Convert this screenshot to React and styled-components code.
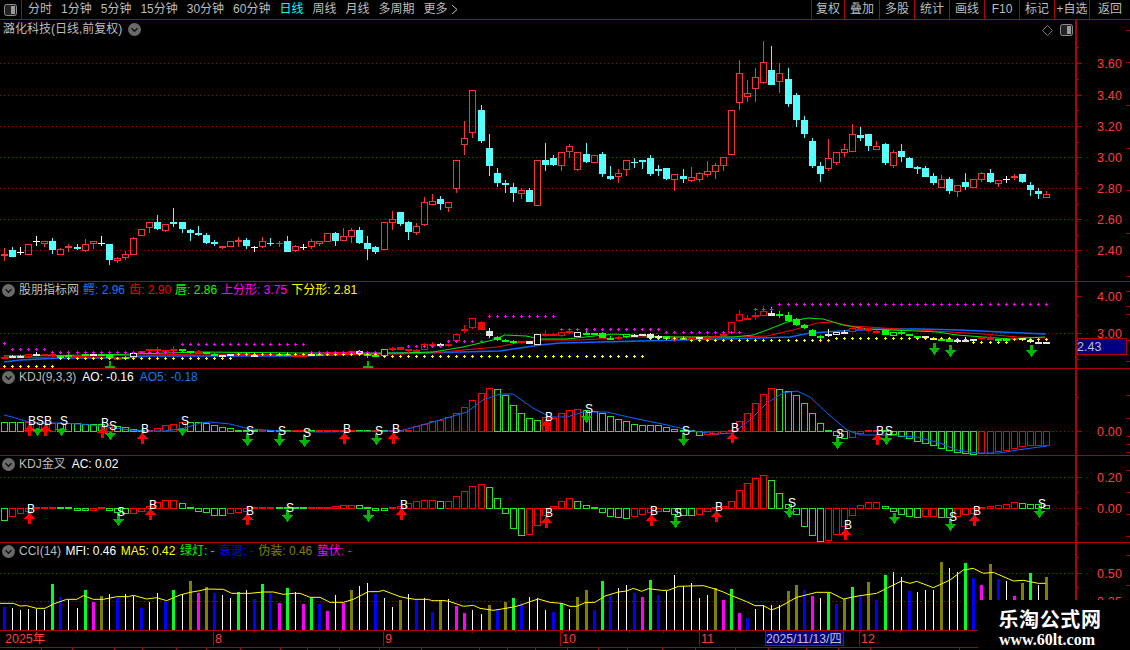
import React from "react";
import styled, { createGlobalStyle } from "styled-components";

const RED_LINE = "#b00000";
const GRID = "#960000";
const TEXT = "#bdbdbd";
const FONT = `"Liberation Sans", "Noto Sans CJK SC", sans-serif`;

const Global = createGlobalStyle`
  html, body { margin: 0; padding: 0; background: #000; }
  body { font-family: ${FONT}; }
`;

const Screen = styled.div`
  position: relative;
  width: 1130px;
  height: 650px;
  overflow: hidden;
  background: #000;
  display: flex;
  flex-direction: column;
  font-size: 12px;
  color: ${TEXT};
`;

const Toolbar = styled.div`
  display: flex;
  align-items: stretch;
  height: 20px;
  flex: 0 0 20px;
  box-sizing: border-box;
  border-bottom: 1px solid ${RED_LINE};
`;
const ToggleCell = styled.div`
  width: 22px;
  display: flex;
  align-items: center;
  justify-content: center;
  box-sizing: border-box;
  border-right: 1px solid ${RED_LINE};
`;
const Nav = styled.nav`
  display: flex;
  align-items: center;
  gap: 9px;
  padding-left: 6px;
`;
const NavItem = styled.span`
  color: ${(p) => (p.$active ? "#00ffff" : TEXT)};
  line-height: 19px;
  white-space: nowrap;
`;
const NavMore = styled.span`
  display: flex;
  margin-left: -6px;
`;
const ToolGroup = styled.div`
  margin-left: auto;
  display: flex;
`;
const ToolButton = styled.div`
  width: ${(p) => p.$w || 35}px;
  box-sizing: border-box;
  border-left: 1px solid ${RED_LINE};
  text-align: center;
  line-height: 19px;
  white-space: nowrap;
  color: ${TEXT};
`;

const Pane = styled.section`
  position: relative;
  display: flex;
  height: ${(p) => p.$h}px;
  flex: 0 0 ${(p) => p.$h}px;
  box-sizing: border-box;
  border-bottom: 1px solid ${RED_LINE};
`;
const PaneHeader = styled.header`
  position: absolute;
  left: ${(p) => p.$left ?? 2}px;
  top: ${(p) => p.$top ?? 0}px;
  display: flex;
  align-items: center;
  gap: ${(p) => p.$gap ?? 6}px;
  height: 16px;
  white-space: nowrap;
`;
const TitleGroup = styled.div`
  display: flex;
  align-items: center;
  gap: 4px;
`;
const Readout = styled.span`
  color: ${(p) => p.$c || TEXT};
  line-height: 16px;
`;
const CornerTools = styled.div`
  position: absolute;
  right: 57px;
  top: 4px;
  display: flex;
  align-items: center;
  gap: 7px;
`;
const ChartSvg = styled.svg`
  display: block;
  flex: 0 0 1075px;
  width: 1075px;
  height: 100%;
  shape-rendering: crispEdges;
`;
const AxisSvg = styled.svg`
  display: block;
  flex: 1 1 auto;
  height: 100%;
  box-sizing: border-box;
  border-left: 2px solid ${RED_LINE};
  shape-rendering: crispEdges;
`;
const AxisLabel = styled.text`
  font-family: ${FONT};
  font-size: 12.5px;
  fill: #ff3c3c;
  letter-spacing: 0.2px;
`;
const PriceTag = styled.text`
  font-family: ${FONT};
  font-size: 12.5px;
  fill: #c0c0c0;
`;
const SignalMark = styled.text`
  font-family: ${FONT};
  font-size: 12px;
  fill: #fff;
  text-anchor: middle;
`;

const TimeAxis = styled.div`
  flex: 0 0 17px;
  height: 17px;
  box-sizing: border-box;
  border-bottom: 1px solid ${RED_LINE};
`;
const TimeSvg = styled.svg`
  display: block;
  width: 1130px;
  height: 16px;
  shape-rendering: crispEdges;
`;
const TimeText = styled.text`
  font-family: ${FONT};
  font-size: 12.5px;
  fill: #ff3c3c;
`;
const CursorText = styled.text`
  font-family: ${FONT};
  font-size: 12.2px;
  fill: #c0c0c0;
`;
const BottomBar = styled.div`
  display: flex;
  flex: 1 1 auto;
`;
const BottomTab = styled.div`
  flex: 0 0 ${(p) => p.$w}px;
  box-sizing: border-box;
  border-right: 1px solid ${RED_LINE};
`;

const Watermark = styled.div`
  position: absolute;
  right: 0;
  bottom: 0;
  width: 152px;
  height: 50px;
  background: #000;
  display: flex;
  flex-direction: column;
  align-items: center;
  padding-right: 8px;
  box-sizing: border-box;
`;
const WatermarkTitle = styled.div`
  color: #fff;
  font-family: "Noto Sans CJK SC", sans-serif;
  font-weight: 700;
  font-size: 20px;
  line-height: 24px;
  margin-top: 7px;
  letter-spacing: 0.6px;
`;
const WatermarkUrl = styled.div`
  color: #fff;
  font-family: "Liberation Serif", serif;
  font-weight: 700;
  font-size: 16px;
  line-height: 16px;
  margin-top: 1px;
  margin-right: 6px;
`;

/* ---------- data ---------- */
const X = (i) => Math.floor(4.3 + 8.08 * i);
const CY = "#55ffff";
const CR = "#ff3232";

// wick top, body top, body bottom, wick bottom, kind — in crop units (y = 40 + v / 3)
const CANDLES = [
  [625,642,648,662,"R"],[622,630,650,650,"c"],[622,636,639,645,"w"],[613,613,644,644,"r"],[589,603,605,617,"w"],
  [604,604,611,620,"r"],[595,603,630,641,"c"],[625,628,644,644,"r"],[613,618,623,635,"R"],[613,621,626,630,"c"],
  [598,613,632,635,"r"],[603,604,613,628,"r"],[589,610,612,618,"w"],[612,612,660,674,"c"],[651,655,663,668,"r"],
  [632,643,653,660,"r"],[592,595,644,645,"r"],[568,568,587,587,"r"],[546,547,563,578,"r"],[526,546,568,570,"c"],
  [553,553,572,575,"r"],[504,546,552,561,"c"],[546,546,567,579,"c"],[568,570,579,603,"c"],[558,579,585,587,"c"],
  [579,585,609,611,"c"],[601,607,611,618,"c"],[617,618,624,627,"R"],[604,604,620,620,"r"],[592,600,606,621,"R"],
  [595,600,618,627,"c"],[617,620,622,636,"w"],[591,604,620,625,"r"],[595,609,612,618,"c"],[604,608,613,620,"R"],
  [589,603,636,636,"c"],[616,619,632,636,"r"],[613,621,623,630,"w"],[598,604,620,627,"r"],[604,604,611,618,"r"],
  [580,580,605,606,"r"],[576,579,603,617,"c"],[565,589,602,603,"r"],[565,571,590,609,"r"],[561,570,609,612,"c"],
  [589,609,627,660,"c"],[618,621,636,642,"c"],[547,547,629,629,"r"],[514,538,548,570,"r"],[516,516,552,558,"c"],
  [543,546,575,600,"c"],[550,559,578,585,"r"],[472,487,554,558,"r"],[462,484,494,495,"r"],[468,477,492,510,"c"],
  [487,487,503,516,"r"],[361,361,446,458,"r"],[243,295,314,345,"r"],[151,151,278,294,"r"],[195,210,303,309,"c"],
  [282,324,378,408,"c"],[384,399,429,441,"c"],[420,428,434,459,"c"],[430,441,459,486,"c"],[445,451,461,477,"r"],
  [445,450,486,486,"c"],[361,361,497,497,"r"],[309,360,375,393,"c"],[346,354,375,378,"c"],
  [335,335,378,393,"r"],[312,319,335,353,"r"],[337,337,389,393,"r"],[309,342,365,368,"c"],[346,346,368,368,"r"],
  [336,343,402,410,"c"],[378,408,417,420,"c"],[388,400,411,429,"r"],[361,361,389,408,"r"],[354,365,369,384,"c"],
  [360,361,366,387,"c"],[346,354,402,408,"c"],[375,387,393,408,"c"],[384,384,417,420,"c"],[403,403,419,453,"r"],
  [387,408,417,429,"c"],[381,412,422,425,"r"],[396,400,419,426,"r"],[363,394,404,411,"r"],[369,376,395,417,"r"],
  [351,351,377,393,"r"],[211,211,344,344,"r"],[60,100,188,210,"r"],[120,160,170,186,"r"],[84,112,146,186,"r"],
  [3,67,128,132,"r"],[18,90,135,135,"c"],[69,100,125,159,"r"],[84,117,192,201,"c"],[160,165,240,261,"c"],
  [228,240,282,294,"c"],[294,303,378,384,"c"],[366,378,402,426,"c"],[297,355,386,393,"r"],[337,337,368,375,"r"],
  [312,328,339,351,"r"],[252,283,335,336,"r"],[261,285,294,303,"c"],[282,282,318,333,"c"],[304,319,329,330,"r"],
  [310,312,369,375,"c"],[331,337,378,384,"r"],[312,333,351,366,"c"],[351,354,384,384,"c"],[378,382,386,402,"c"],
  [378,384,411,411,"c"],[399,408,429,435,"c"],[405,418,444,444,"r"],[411,417,453,462,"c"],[436,436,455,471,"r"],
  [399,426,441,450,"c"],[418,418,444,444,"r"],[396,400,419,426,"r"],[387,399,426,429,"c"],[421,421,431,441,"r"],
  [408,417,420,429,"w"],[402,408,413,420,"R"],[402,402,426,429,"c"],[426,435,450,468,"c"],[444,453,462,477,"c"],
  [453,463,473,474,"r"],
];

const ALLIG_KIND = ("r W w r W r R G g r g W g G r g w R R R R r G G r G g W W R r W R R g G R r W g R R R r W G G g R " +
  "R R r r R W R r R r R W G G G r W w R R r R w G G G G r g W W W W G R G R W R R r r r R r r W g G G G G G w w w r R R R G g G G G W W g G W W w R R g G R W W W W").split(" ");

const MACD = ("g9 g9 g9 r9 r9 r8 r8 g8 g8 g8 g7 g7 g7 r6 g5 g4 g2 g1 r1 r3 r6 r7 r9 g9 g9 g8 g6 g4 g3 g1 g1 g1 r0 g0 g0 g0 r0 r0 g0 r0 r-1 r-1 r1 r1 g0 g0 r0 g0 r0 " +
  "r1 r1 r5 r7 r10 r11 r14 r18 r24 r31 r38 r43 g42 g36 g26 g18 g13 g11 r14 r13 r18 r21 r22 g21 g20 g18 g15 g12 g10 g7 g6 g6 g6 g4 g2 g1 g0 g-4 r-3 r-3 r-2 r1 " +
  "r10 r18 r28 r37 r43 g42 g40 g36 g28 g18 g8 g0 g-4 g-7 r-6 r-2 r0 r0 g0 g-3 g-5 g-7 g-10 g-12 g-14 g-17 g-19 g-21 g-22 g-23 r-22 r-22 r-20 r-19 r-17 r-15 r-14 r-14 r-14").split(" ");

const CROSS = ("g-12 r-8 r-5 r-3 r0 R0 R0 g0 g0 g-2 g-2 r-2 R0 g-2 g-4 g-5 r-5 r-3 r2 r6 r8 r8 g5 g0 g-3 g-4 g-7 g-7 r-5 r-4 r-3 r-1 R0 r0 g0 g0 g0 G0 R0 r0 R0 r2 r3 r3 g3 g0 g-2 g-2 r0 r2 r5 r7 r8 r8 g7 r7 r12 r17 r22 r24 g21 g10 g-5 g-20 g-27 r-26 r-17 r-7 r2 " +
  "r7 r10 g7 g3 G0 g-4 g-8 g-9 g-10 r-8 r-6 r-4 r-3 g-3 g-6 g-7 g-7 r-6 r-3 r1 r2 r7 r18 r25 r30 r33 g28 g15 g4 g-6 g-18 g-27 g-33 r-32 r-26 r-18 r-7 r3 r6 r6 g2 g-3 g-6 g-8 g-9 r-8 r-8 g-9 g-9 r-8 r-6 r-5 R0 r2 r3 r4 r6 g5 g4 g4 g3").split(" ");

const parseVol = (s, off) => s.split(" ").map((t) => ({ k: t[0], y: off + Number(t.slice(1)) / 3 }));
const VOL = [
  ...parseVol("B201 W204 W210 W207 W207 W210 G132 B171 W180 W204 G150 M186 O168 W162 B174 W162 W167 B204 W186 W159 B183 G150 W162 O123 M159 O141 B159 W165 W174 G156 W150 B177 G132 B159 M189 G144 W156 M192 G174 B192 M213 W165 M189 O150 W138 W129 B162 W174 W201", 540),
  ...parseVol("O165 W147 B165 W159 B201 O165 W162 M183 M204 W195 W207 O180 B195 O171 G159 B174 W156 W159 W195 B201 G174 W192 O156 O135 B195 G108 B150 W129 W120 B144 M156 G105 B150 W138 W90 W122 W114 W159 W150 O130 M165", 545),
  ...parseVol("G147 M219 B234 W207 W195 W195 W195 O153 O135 B150 M168 W174 G159 B192 O178 G141 B168 O126 B180 G105 W96 W111 B153 W156 W150 W150 O66 W84 W96 G69 B114 M135 O72 B117 W123 M168 O129 G99 W135 O111", 540),
];
const VOL_COL = { B: "#0000ff", W: "#ffffff", G: "#00ff20", M: "#ff00ff", O: "#808000" };

const crop = (pts, ox, oy, sx = 3) => pts.map(([x, y]) => [ox + x / sx, oy + y / 3]);
const MFI_LINE = [
  ...crop([[0,190],[40,190],[60,198],[80,197],[110,205],[135,205],[160,192],[200,178],[230,178],[250,167],[280,178],[310,178],[350,170],[385,170],[400,166],[440,177],[470,173],[500,182],[540,165],[570,157],[600,152],[620,147],[670,148],[695,160],[750,160],[790,156],[820,156],[850,163],[880,160],[900,160],[930,172],[960,172],[990,187],[1030,187],[1060,178],[1105,155],[1135,155],[1150,151]], 0, 540),
  ...crop([[15,155],[40,160],[60,163],[100,163],[110,167],[150,167],[165,170],[180,175],[205,184],[235,181],[255,190],[295,196],[320,192],[355,186],[375,181],[405,170],[430,162],[465,172],[500,175],[525,184],[545,184],[570,173],[600,172],[630,153],[670,141],[695,138],[715,130],[740,139],[760,131],[800,136],[820,136],[850,124],[925,122],[960,132],[985,141]], 395, 545),
  ...crop([[0,165],[50,185],[75,197],[100,197],[125,210],[150,200],[200,172],[260,157],[300,157],[340,177],[390,167],[440,160],[490,135],[515,123],[540,130],[560,124],[610,143],[660,120],[700,90],[730,85],[760,100],[790,97],[850,123],[880,121],[925,130],[947,130]], 730, 540),
];

const BLUE_LINE2 = [[4,362],[20,360],[60,358],[120,358],[150,356],[240,356],[300,356],[400,353],[460,352],[500,351],[520,348],[540,345],[560,343],[600,342],[640,341],[680,340],[720,339],[760,338],[790,337],[810,333],[840,331],[880,329],[920,329],[960,330],[1000,332],[1046,334]];
const RED_LINE2 = [[4,358],[100,356],[200,354],[300,355],[400,354],[433,353],[463,350],[497,347],[517,343],[540,340],[580,340],[633,337],[733,337],[767,336],[793,330],[817,323],[833,322],[850,326],[883,328],[917,330],[950,332],[983,334],[1017,337],[1045,338]];
const GREEN_LINE2 = [[4,356],[100,355],[200,352],[300,353],[400,353],[433,352],[463,347],[493,340],[505,335],[526,336],[540,339],[567,339],[613,334],[667,337],[733,337],[753,335],[767,330],[787,322],[808,318],[823,319],[843,325],[867,329],[890,330],[917,331],[937,332],[957,335],[983,337],[1010,339],[1045,337]];

const BLUE_KDJ = [[4,415],[12,417],[25,421],[30,423],[60,423],[80,424],[100,426],[115,428],[130,430],[145,431],[165,431],[185,428],[200,423],[210,422],[230,424],[250,429],[280,431],[320,432],[400,431],[433,422],[467,412],[483,400],[500,394],[513,394],[533,408],[550,417],[567,417],[583,412],[607,412],[633,418],[667,425],[693,431],[717,434],[733,433],[750,420],[767,403],[783,393],[797,391],[810,397],[827,413],[847,430],[860,435],[883,435],[917,437],[940,443],[957,450],[977,453],[1000,453],[1017,450],[1047,446]];

const dots = (segs) => segs.flatMap(([a, b, y]) => Array.from({ length: b - a + 1 }, (_, k) => [X(a + k), y]));
const PURPLE = dots([[0,0,343],[1,5,349],[6,21,352],[22,37,344],[38,46,352],[50,54,346],[55,59,341],[60,68,316],[69,81,329],[82,91,332],[93,95,309],[96,129,304]]);
const YELLOW = dots([[0,6,366],[7,28,358],[29,46,354],[47,79,356],[80,84,338],[85,102,340],[103,117,338],[118,119,339],[120,124,342],[125,129,339]]);

const UP3 = [[29,424,436],[45,424,436],[102,426,438],[142,432,444],[344,432,444],[393,432,444],[546,419,431],[732,432,443],[877,433,445]];
const DOWN3 = [[37,428,436],[61,428,436],[110,432,440],[182,428,436],[247,434,446],[279,434,446],[304,435,447],[376,434,445],[586,412,423],[683,433,446],[837,437,449],[886,434,445]];
const MARKS3 = [["B",32,421],["S",40,421],["B",48,421],["S",64,421],["B",105,423],["S",113,426],["B",145,429],["S",185,421],["S",250,431],["S",282,431],["S",307,433],["B",347,429],["S",379,431],["B",396,429],["B",549,417],["S",589,409],["S",686,431],["B",735,428],["S",840,434],["B",880,431],["S",889,431]];

const UP4 = [[29,512,524],[150,508,520],[247,513,525],[401,508,520],[546,516,528],[651,514,526],[716,510,522],[845,528,540],[974,514,526]];
const DOWN4 = [[118,513,526],[287,510,522],[368,510,522],[675,516,528],[789,507,518],[894,513,524],[950,519,531],[1039,507,518]];
const MARKS4 = [["B",31,509],["S",121,512],["B",153,505],["B",250,511],["S",290,508],["B",404,505],["B",549,513],["B",654,511],["S",678,513],["B",719,507],["S",792,503],["B",848,525],["S",953,517],["B",977,511],["S",1042,504]];

const DOWN2 = [[934,343,355],[950,345,357],[1031,345,357]];

const NAV = ["分时", "1分钟", "5分钟", "15分钟", "30分钟", "60分钟", "日线", "周线", "月线", "多周期", "更多"];
const TOOLS = [["复权",33],["叠加"],["多股"],["统计"],["画线"],["F10"],["标记"],["+自选"],["返回",41]];
const TAB_STOPS = [42,73,115,143,177,207,241,281,308,340,380,422,480,508,536,568,599,628,663,696,736,769,807,839,871,960];

/* ---------- drawing helpers ---------- */
const PanelIcon = () => (
  <svg width="13" height="12" viewBox="0 0 13 12">
    <rect x="0.5" y="0.5" width="12" height="11" rx="2" fill="#222" stroke="#8c8c8c" />
    <rect x="7" y="2" width="4" height="8" fill="#9a9a9a" />
  </svg>
);
const ChevronBadge = () => (
  <svg width="13" height="13" viewBox="0 0 13 13">
    <circle cx="6.5" cy="6.5" r="6.5" fill="#6a6a6a" />
    <path d="M3.5 5.2 L6.5 8.2 L9.5 5.2" fill="none" stroke="#111" strokeWidth="1.4" />
  </svg>
);
const DiamondIcon = () => (
  <svg width="11" height="11" viewBox="0 0 11 11">
    <path d="M5.5 0.5 L10.5 5.5 L5.5 10.5 L0.5 5.5 Z" fill="none" stroke="#777" />
  </svg>
);
const Chevron = () => (
  <svg width="7" height="11" viewBox="0 0 7 11">
    <path d="M1 1 L6 5.5 L1 10" fill="none" stroke={TEXT} />
  </svg>
);

const PriceCandle = ({ i, d }) => {
  const [wt, bt, bb, wb, k] = d.map((v) => (typeof v === "number" ? Math.round(40 + v / 3) : v));
  const x = X(i);
  const col = k === "c" ? CY : k === "w" ? "#fff" : CR;
  if (k === "r") {
    return (
      <g>
        <rect x={x} y={wt} width="1" height={Math.max(0, bt - wt)} fill={col} />
        <rect x={x} y={bb} width="1" height={Math.max(0, wb - bb)} fill={col} />
        <rect x={x - 3 + 0.5} y={bt + 0.5} width="6" height={Math.max(1, bb - bt - 1)} fill="none" stroke={col} />
      </g>
    );
  }
  return (
    <g>
      <rect x={x} y={wt} width="1" height={wb - wt} fill={col} />
      <rect x={x - 3} y={bt} width="7" height={Math.max(1, bb - bt)} fill={col} />
    </g>
  );
};

const toSub = (v) => Math.round(311.2 + (40 + v / 3 - 63.3) * 0.2385);
const ALLIG_COL = { r: "#ff0000", R: "#ff0000", g: "#00ff00", G: "#00ff00", w: "#e4e4e4", W: "#e4e4e4" };
const SubCandle = ({ i, d }) => {
  const [wt, bt, bb, wb] = d;
  const k = ALLIG_KIND[i] || "r";
  const col = ALLIG_COL[k];
  const x = X(i);
  const top = toSub(bt);
  const h = Math.max(2, toSub(bb) - top);
  const hollow = k === k.toLowerCase();
  return (
    <g>
      <rect x={x} y={toSub(wt)} width="1" height={Math.max(1, toSub(wb) - toSub(wt))} fill={col} />
      {hollow ? (
        <rect x={x - 3 + 0.5} y={top + 0.5} width="6" height={Math.max(1, h - 1)} fill="#000" stroke={col} />
      ) : (
        <rect x={x - 3} y={top} width="7" height={h} fill={col} />
      )}
    </g>
  );
};

const Poly = ({ pts, col, w = 1 }) => (
  <polyline
    points={pts.map((p) => p.join(",")).join(" ")}
    fill="none"
    stroke={col}
    strokeWidth={w}
    shapeRendering="auto"
  />
);

const DottedRule = ({ y, from = 0, to = 1075 }) => (
  <line x1={from} x2={to} y1={y + 0.5} y2={y + 0.5} stroke={GRID} strokeDasharray="1 3" />
);

const Plus = ({ x, y, col }) => (
  <path d={`M${x - 1} ${y + 0.5}h3M${x + 0.5} ${y - 1}v3`} stroke={col} strokeWidth="1" fill="none" />
);

const ArrowUp = ({ x, y1, y2 }) => (
  <path d={`M${x + 0.5} ${y1} L${x + 6} ${y1 + 7} L${x + 2} ${y1 + 7} L${x + 2} ${y2} L${x - 1} ${y2} L${x - 1} ${y1 + 7} L${x - 5} ${y1 + 7} Z`} fill="#ff0000" />
);
const ArrowDown = ({ x, y1, y2 }) => (
  <path d={`M${x + 0.5} ${y2} L${x + 6} ${y2 - 7} L${x + 2} ${y2 - 7} L${x + 2} ${y1} L${x - 1} ${y1} L${x - 1} ${y2 - 7} L${x - 5} ${y2 - 7} Z`} fill="#00b800" />
);

const HistoBars = ({ data, base }) =>
  data.map((t, i) => {
    const kind = t[0];
    const h = Number(t.slice(1));
    const col = kind === "g" || kind === "G" ? "#1ee81e" : "#ff0000";
    const x = X(i);
    if (Math.abs(h) <= 1) {
      return <rect key={i} x={x - 3} y={base - 1} width="7" height="2" fill={col} />;
    }
    const top = h > 0 ? base - h : base;
    return <rect key={i} x={x - 3 + 0.5} y={top + 0.5} width="6" height={Math.abs(h)} fill="#000" stroke={col} />;
  });

const Signals = ({ ups, downs, marks }) => (
  <>
    {ups.map(([x, a, b]) => <ArrowUp key={`u${x}`} x={x} y1={a} y2={b} />)}
    {downs.map(([x, a, b]) => <ArrowDown key={`d${x}`} x={x} y1={a} y2={b} />)}
    {marks &&
      marks.map(([s, x, y]) => (
        <SignalMark key={`${s}${x}`} x={x} y={y + 4}>{s}</SignalMark>
      ))}
  </>
);

const Axis = ({ top, h, labels, major, minor, edge, children }) => (
  <AxisSvg viewBox={`1077 ${top} 53 ${h}`}>
    {major.map((y) => <rect key={y} x="1077" y={y} width="5" height="1" fill={RED_LINE} />)}
    {minor.map((y) => <rect key={y} x="1077" y={y} width="2" height="1" fill={RED_LINE} />)}
    {edge.map((y) => <rect key={y} x="1126" y={y} width="4" height="1" fill={RED_LINE} />)}
    {labels.map(([t, y]) => (
      <AxisLabel key={t} x="1097" y={y + 4.5}>{t}</AxisLabel>
    ))}
    {children}
  </AxisSvg>
);

export default function App() {
  return (
    <Screen>
      <Global />
      <Toolbar>
        <ToggleCell><PanelIcon /></ToggleCell>
        <Nav>
          {NAV.map((n) => <NavItem key={n} $active={n === "日线"}>{n}</NavItem>)}
          <NavMore><Chevron /></NavMore>
        </Nav>
        <ToolGroup>
          {TOOLS.map(([n, w]) => <ToolButton key={n} $w={w}>{n}</ToolButton>)}
        </ToolGroup>
      </Toolbar>

      {/* main price pane */}
      <Pane $h={262}>
        <ChartSvg viewBox="0 20 1075 261">
          {[63, 95, 126, 157, 188, 219, 250].map((y) => <DottedRule key={y} y={y} />)}
          {CANDLES.map((d, i) => <PriceCandle key={i} i={i} d={d} />)}
        </ChartSvg>
        <Axis
          top={20} h={261}
          labels={[["3.60",63],["3.40",95],["3.20",126.5],["3.00",157.5],["2.80",188.5],["2.60",219.5],["2.40",250.5]]}
          major={[63,95,126,157,188,219,250]}
          minor={[47,79,110,142,173,204,235,266]}
          edge={[30,62,105,148,190,233,276]}
        />
        <PaneHeader $top={1} $left={3}>
          <Readout>潞化科技(日线,前复权)</Readout>
          <ChevronBadge />
        </PaneHeader>
        <CornerTools>
          <DiamondIcon />
          <PanelIcon />
        </CornerTools>
      </Pane>

      {/* alligator pane */}
      <Pane $h={87}>
        <ChartSvg viewBox="0 282 1075 86">
          <DottedRule y={333} />
          <Poly pts={BLUE_LINE2} col="#0a66ff" w={1.4} />
          <Poly pts={RED_LINE2} col="#ff0000" />
          <Poly pts={GREEN_LINE2} col="#00ee00" />
          {CANDLES.map((d, i) => <SubCandle key={i} i={i} d={d} />)}
          {PURPLE.map(([x, y]) => <Plus key={`p${x}`} x={x} y={y} col="#ff00ff" />)}
          {YELLOW.map(([x, y]) => <Plus key={`y${x}`} x={x} y={y} col="#ffff00" />)}
          {[110, 368].map((x) => (
            <path key={x} d={`M${x - 1} 361h2v5h4v2h-10v-2h4z`} fill="#00b800" />
          ))}
          <Signals ups={[]} downs={DOWN2} />
        </ChartSvg>
        <Axis
          top={282} h={86}
          labels={[["4.00",296],["3.00",333.5]]}
          major={[296,333]}
          minor={[315,359]}
          edge={[291,306,314,340,361]}
        >
          <rect x="1077.5" y="338.5" width="49" height="16" fill="#000080" stroke={RED_LINE} />
          <PriceTag x="1077" y="351">2.43</PriceTag>
        </Axis>
        <PaneHeader $gap={4}>
          <TitleGroup>
            <ChevronBadge />
            <Readout>股朋指标网</Readout>
          </TitleGroup>
          <Readout $c="#1478ff">鳄: 2.96</Readout>
          <Readout $c="#ff0000">齿: 2.90</Readout>
          <Readout $c="#00ff00">唇: 2.86</Readout>
          <Readout $c="#ff00ff">上分形: 3.75</Readout>
          <Readout $c="#ffff00">下分形: 2.81</Readout>
        </PaneHeader>
      </Pane>

      {/* KDJ pane */}
      <Pane $h={87}>
        <ChartSvg viewBox="0 369 1075 86">
          <DottedRule y={431} from={1052} />
          <HistoBars data={MACD} base={431} />
          <Poly pts={BLUE_KDJ} col="#0a66ff" />
          <Signals ups={UP3} downs={DOWN3} marks={MARKS3} />
        </ChartSvg>
        <Axis
          top={369} h={86}
          labels={[["0.00",431.5]]}
          major={[431]}
          minor={[397]}
          edge={[395,418,436,444,452]}
        />
        <PaneHeader>
          <TitleGroup>
            <ChevronBadge />
            <Readout>KDJ(9,3,3)</Readout>
          </TitleGroup>
          <Readout $c="#fff">AO: -0.16</Readout>
          <Readout $c="#1478ff">AO5: -0.18</Readout>
        </PaneHeader>
      </Pane>

      {/* KDJ cross pane */}
      <Pane $h={87}>
        <ChartSvg viewBox="0 456 1075 86">
          <DottedRule y={477} />
          <DottedRule y={508} from={1052} />
          <HistoBars data={CROSS} base={508} />
          <Signals ups={UP4} downs={DOWN4} marks={MARKS4} />
        </ChartSvg>
        <Axis
          top={456} h={86}
          labels={[["0.20",477.5],["0.00",508]]}
          major={[477,508]}
          minor={[492,523]}
          edge={[470,492,514,536]}
        />
        <PaneHeader>
          <TitleGroup>
            <ChevronBadge />
            <Readout>KDJ金叉</Readout>
          </TitleGroup>
          <Readout $c="#fff">AC: 0.02</Readout>
        </PaneHeader>
      </Pane>

      {/* volume pane */}
      <Pane $h={88}>
        <ChartSvg viewBox="0 543 1075 87">
          <DottedRule y={573} />
          <DottedRule y={601} />
          {VOL.map((v, i) => {
            const x = X(i);
            const top = Math.round(v.y);
            return v.k === "W" ? (
              <rect key={i} x={x} y={top} width="1" height={630 - top} fill={VOL_COL.W} />
            ) : (
              <rect key={i} x={x - 1} y={top} width="3" height={630 - top} fill={VOL_COL[v.k]} />
            );
          })}
          <Poly pts={MFI_LINE} col="#ffff00" />
        </ChartSvg>
        <Axis
          top={543} h={87}
          labels={[["0.50",573.5],["0.25",601]]}
          major={[573,601]}
          minor={[557,587]}
          edge={[555,585]}
        />
        <PaneHeader $gap={4.5}>
          <TitleGroup>
            <ChevronBadge />
            <Readout>CCI(14)</Readout>
          </TitleGroup>
          <Readout $c="#fff">MFI: 0.46</Readout>
          <Readout $c="#ffff00">MA5: 0.42</Readout>
          <Readout $c="#00ff00">绿灯: -</Readout>
          <Readout $c="#0000ff">衰退: -</Readout>
          <Readout $c="#808000">伪装: 0.46</Readout>
          <Readout $c="#ff00ff">蛰伏: -</Readout>
        </PaneHeader>
      </Pane>

      <TimeAxis>
        <TimeSvg viewBox="0 631 1130 16">
          {[75, 213, 254, 300, 341, 383, 427, 472, 515, 562, 595, 629, 663, 697, 740, 782, 860, 900].map((x) => (
            <rect key={x} x={x} y="631" width="1" height="2" fill={RED_LINE} />
          ))}
          {[213, 383, 560, 699, 859].map((x) => (
            <rect key={x} x={x} y="631" width="1" height="15" fill={RED_LINE} />
          ))}
          <TimeText x="5" y="643">2025年</TimeText>
          <TimeText x="215" y="643">8</TimeText>
          <TimeText x="385" y="643">9</TimeText>
          <TimeText x="562" y="643">10</TimeText>
          <TimeText x="701" y="643">11</TimeText>
          <TimeText x="861" y="643">12</TimeText>
          <rect x="765.5" y="630.5" width="78" height="15" fill="#000080" stroke={RED_LINE} />
          <CursorText x="766" y="643">2025/11/13/四</CursorText>
        </TimeSvg>
      </TimeAxis>
      <BottomBar>
        {TAB_STOPS.map((s, i) => (
          <BottomTab key={s} $w={s - (TAB_STOPS[i - 1] || 0)} />
        ))}
      </BottomBar>

      <Watermark>
        <WatermarkTitle>乐淘公式网</WatermarkTitle>
        <WatermarkUrl>www.60lt.com</WatermarkUrl>
      </Watermark>
    </Screen>
  );
}
